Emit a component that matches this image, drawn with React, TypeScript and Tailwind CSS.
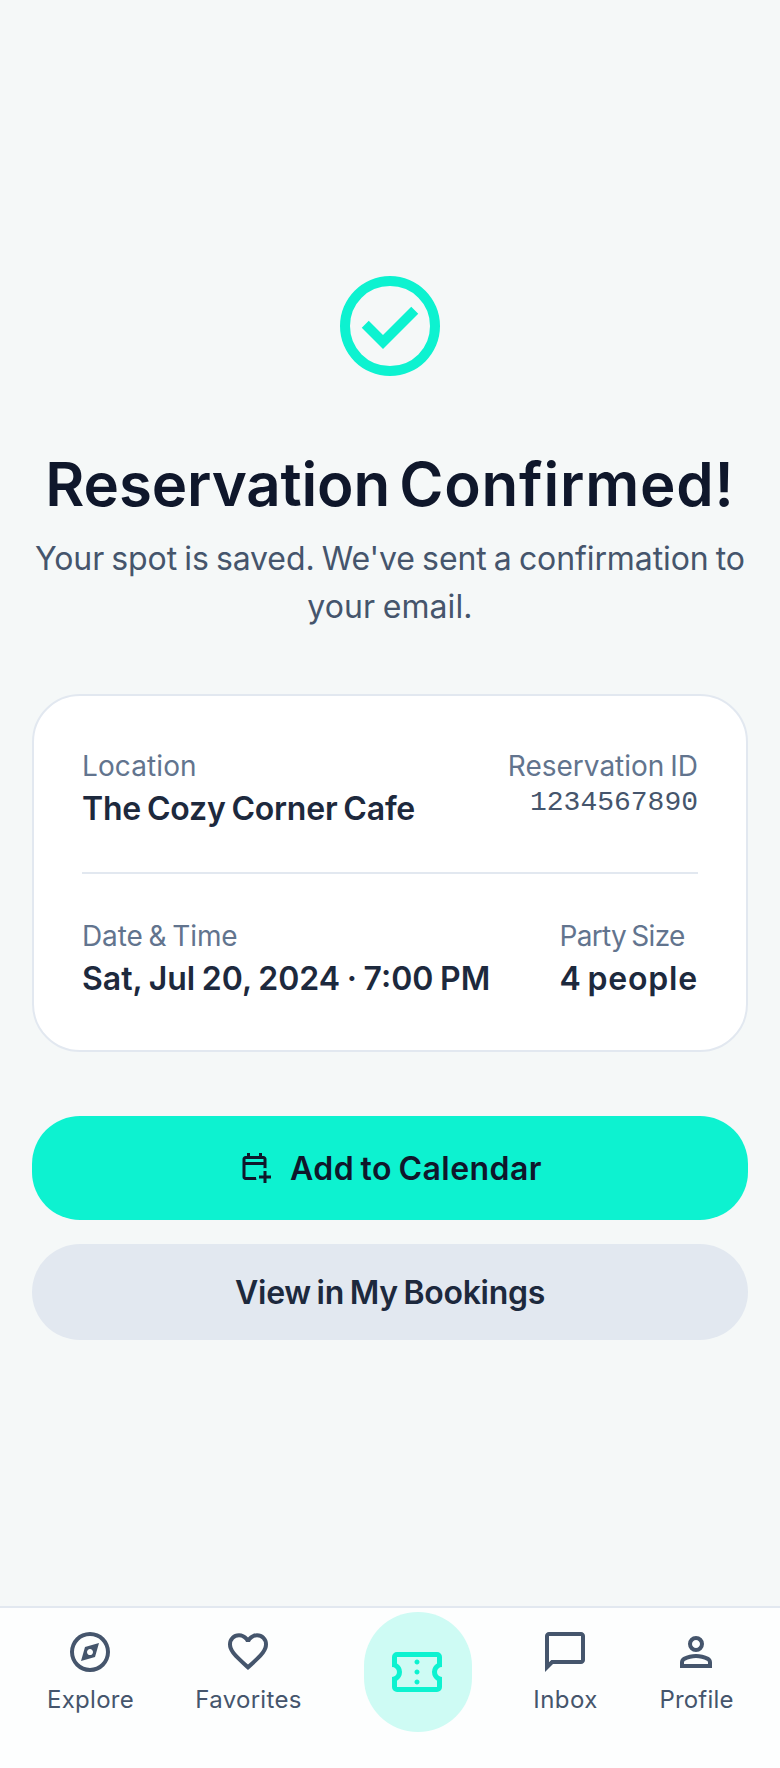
import type { ReactNode } from 'react';

const icons = {
  check:
    'm424-296 282-282-56-56-226 226-114-114-56 56 170 170Zm56 216q-83 0-156-31.5T197-197q-54-54-85.5-127T80-480q0-83 31.5-156T197-763q54-54 127-85.5T480-880q83 0 156 31.5T763-763q54 54 85.5 127T880-480q0 83-31.5 156T763-197q-54 54-127 85.5T480-80Zm0-80q134 0 227-93t93-227q0-134-93-227t-227-93q-134 0-227 93t-93 227q0 134 93 227t227 93Z',
  calendarAdd:
    'M680-80v-120H560v-80h120v-120h80v120h120v80H760v120h-80Zm-480-80q-33 0-56.5-23.5T120-240v-480q0-33 23.5-56.5T200-800h40v-80h80v80h240v-80h80v80h40q33 0 56.5 23.5T760-720v244q-20-3-40-3t-40 3v-84H200v320h280q0 20 3 40t11 40H200Zm0-480h480v-80H200v80Z',
  explore:
    'm300-300 280-80 80-280-280 80-80 280Zm180-120q-25 0-42.5-17.5T420-480q0-25 17.5-42.5T480-540q25 0 42.5 17.5T540-480q0 25-17.5 42.5T480-420Zm0 340q-83 0-156-31.5T197-197q-54-54-85.5-127T80-480q0-83 31.5-156T197-763q54-54 127-85.5T480-880q83 0 156 31.5T763-763q54 54 85.5 127T880-480q0 83-31.5 156T763-197q-54 54-127 85.5T480-80Zm0-80q134 0 227-93t93-227q0-134-93-227t-227-93q-134 0-227 93t-93 227q0 134 93 227t227 93Z',
  favorite:
    'm480-120-58-52q-101-91-167-157T150-447.5Q111-500 95.5-544T80-634q0-94 63-157t157-63q52 0 99 22t81 62q34-40 81-62t99-22q94 0 157 63t63 157q0 46-15.5 90T810-447.5Q771-395 705-329T538-172l-58 52Zm0-108q96-86 158-147.5t98-107q36-45.5 50-81t14-70.5q0-60-40-100t-100-40q-47 0-87 26.5T518-680h-76q-15-41-55-67.5T300-774q-60 0-100 40t-40 100q0 35 14 70.5t50 81q36 45.5 98 107T480-228Z',
  ticket:
    'M480-280q17 0 28.5-11.5T520-320q0-17-11.5-28.5T480-360q-17 0-28.5 11.5T440-320q0 17 11.5 28.5T480-280Zm0-160q17 0 28.5-11.5T520-480q0-17-11.5-28.5T480-520q-17 0-28.5 11.5T440-480q0 17 11.5 28.5T480-440Zm0-160q17 0 28.5-11.5T520-640q0-17-11.5-28.5T480-680q-17 0-28.5 11.5T440-640q0 17 11.5 28.5T480-600Zm320 440H160q-33 0-56.5-23.5T80-240v-160q33 0 56.5-23.5T160-480q0-33-23.5-56.5T80-560v-160q0-33 23.5-56.5T160-800h640q33 0 56.5 23.5T880-720v160q-33 0-56.5 23.5T800-480q0 33 23.5 56.5T880-400v160q0 33-23.5 56.5T800-160Zm0-80v-102q-37-22-58.5-58.5T720-480q0-43 21.5-79.5T800-618v-102H160v102q37 22 58.5 58.5T240-480q0 43-21.5 79.5T160-342v102h640Z',
  inbox:
    'M80-80v-720q0-33 23.5-56.5T160-880h640q33 0 56.5 23.5T880-800v480q0 33-23.5 56.5T800-240H240L80-80Zm126-240h594v-480H160v525l46-45Z',
  profile:
    'M480-480q-66 0-113-47t-47-113q0-66 47-113t113-47q66 0 113 47t47 113q0 66-47 113t-113 47ZM160-160v-112q0-34 17.5-62.5T224-378q62-31 126-46.5T480-440q66 0 130 15.5T736-378q29 15 46.5 43.5T800-272v112H160Zm80-80h480v-32q0-11-5.5-20T700-306q-54-27-109-40.5T480-360q-56 0-111 13.5T260-306q-9 5-14.5 14t-5.5 20v32Zm240-320q33 0 56.5-23.5T560-640q0-33-23.5-56.5T480-720q-33 0-56.5 23.5T400-640q0 33 23.5 56.5T480-560Z',
};

function Icon({ name, className }: { name: keyof typeof icons; className: string }) {
  return (
    <svg viewBox="0 -960 960 960" fill="currentColor" aria-hidden="true" className={`shrink-0 ${className}`}>
      <path d={icons[name]} />
    </svg>
  );
}

function Label({ className = '', children }: { className?: string; children: ReactNode }) {
  return <p className={`pt-1 text-[28px] leading-9 text-slate-500 ${className}`}>{children}</p>;
}

function Value({ className = '', children }: { className?: string; children: ReactNode }) {
  return <p className={`pt-px text-[32px] leading-[47px] font-semibold text-slate-800 ${className}`}>{children}</p>;
}

function NavItem({ icon, className, children }: { icon: keyof typeof icons; className: string; children: ReactNode }) {
  return (
    <a className={`flex flex-col items-center pt-[16px] text-slate-600 ${className}`}>
      <Icon name={icon} className="size-12" />
      <span className="mt-2 pl-px text-[24px] leading-8">{children}</span>
    </a>
  );
}

export default function App() {
  return (
    <div className="flex h-[1768px] w-[780px] flex-col bg-[#f5f8f8] font-['Inter',sans-serif] whitespace-nowrap">
      <main className="flex flex-1 flex-col px-8 pt-[266px]">
        <Icon name="check" className="size-[120px] self-center text-[#0df2d0]" />

        <h1 className="mt-[61px] text-center text-[60px] leading-[75px] font-semibold text-slate-900 [word-spacing:-6px]">
          <span className="tracking-[-0.15px]">Reservation</span> <span className="tracking-[0.8px]">Confirmed!</span>
        </h1>
        <p className="mt-[13px] text-center text-[32px] leading-[48px] tracking-[-0.1px] text-slate-600 [word-spacing:-1.7px]">
          Your spot is saved. We've sent a confirmation to
          <br />
          <span className="tracking-[0.1px]">your email.</span>
        </p>

        <section className="mt-[63px] flex flex-col rounded-[48px] border-2 border-slate-200 bg-white p-12">
          <div className="flex justify-between border-b-2 border-slate-200 pb-10">
            <div>
              <Label className="tracking-[0.1px]">Location</Label>
              <Value className="tracking-[-0.2px] [word-spacing:-2px]">The Cozy Corner Cafe</Value>
            </div>
            <div className="text-right">
              <Label className="[word-spacing:-2px]">Reservation ID</Label>
              <p className="font-['Liberation_Mono',monospace] text-[28px] leading-[38px] text-slate-600">1234567890</p>
            </div>
          </div>
          <div className="flex justify-between pt-10">
            <div>
              <Label className="tracking-[-0.1px] [word-spacing:-2px]">Date &amp; Time</Label>
              <Value className="[word-spacing:-1.4px]">Sat, Jul 20, 2024 · 7:00 PM</Value>
            </div>
            <div>
              <Label className="tracking-[-0.7px] [word-spacing:-2px]">Party Size</Label>
              <Value className="tracking-[0.8px] [word-spacing:-3px]">4 people</Value>
            </div>
          </div>
        </section>

        <div className="mt-16 flex flex-col gap-6">
          <button className="flex h-[104px] items-center justify-center gap-4 rounded-[48px] bg-[#0df2d0] text-[32px] font-semibold tracking-[0.45px] text-slate-900 [word-spacing:-2px]">
            <Icon name="calendarAdd" className="size-9" />
            <span className="pt-[2px]">Add to Calendar</span>
          </button>
          <button className="flex h-24 items-center justify-center rounded-[48px] bg-slate-200 pt-[2px] text-[32px] font-semibold tracking-[-0.3px] text-slate-800 [word-spacing:-2px]">
            View in My Bookings
          </button>
        </div>
      </main>

      <nav className="flex h-[162px] items-start border-t-2 border-slate-200 bg-[#fdfefe] px-[46px] pt-1">
        <NavItem icon="explore" className="w-[88px] tracking-[0.3px]">Explore</NavItem>
        <NavItem icon="favorite" className="ml-[62px] w-[104px] tracking-[0.3px]">Favorites</NavItem>
        <a className="ml-16 flex h-[120px] w-[108px] items-center justify-center rounded-full bg-[#cefbf4] pr-[2px] text-[#0df2d0]">
          <Icon name="ticket" className="size-[60px]" />
        </a>
        <NavItem icon="inbox" className="ml-[62px] w-[62px] tracking-[0.4px]">Inbox</NavItem>
        <NavItem icon="profile" className="ml-[63px] w-[74px] tracking-[0.2px]">Profile</NavItem>
      </nav>
    </div>
  );
}
